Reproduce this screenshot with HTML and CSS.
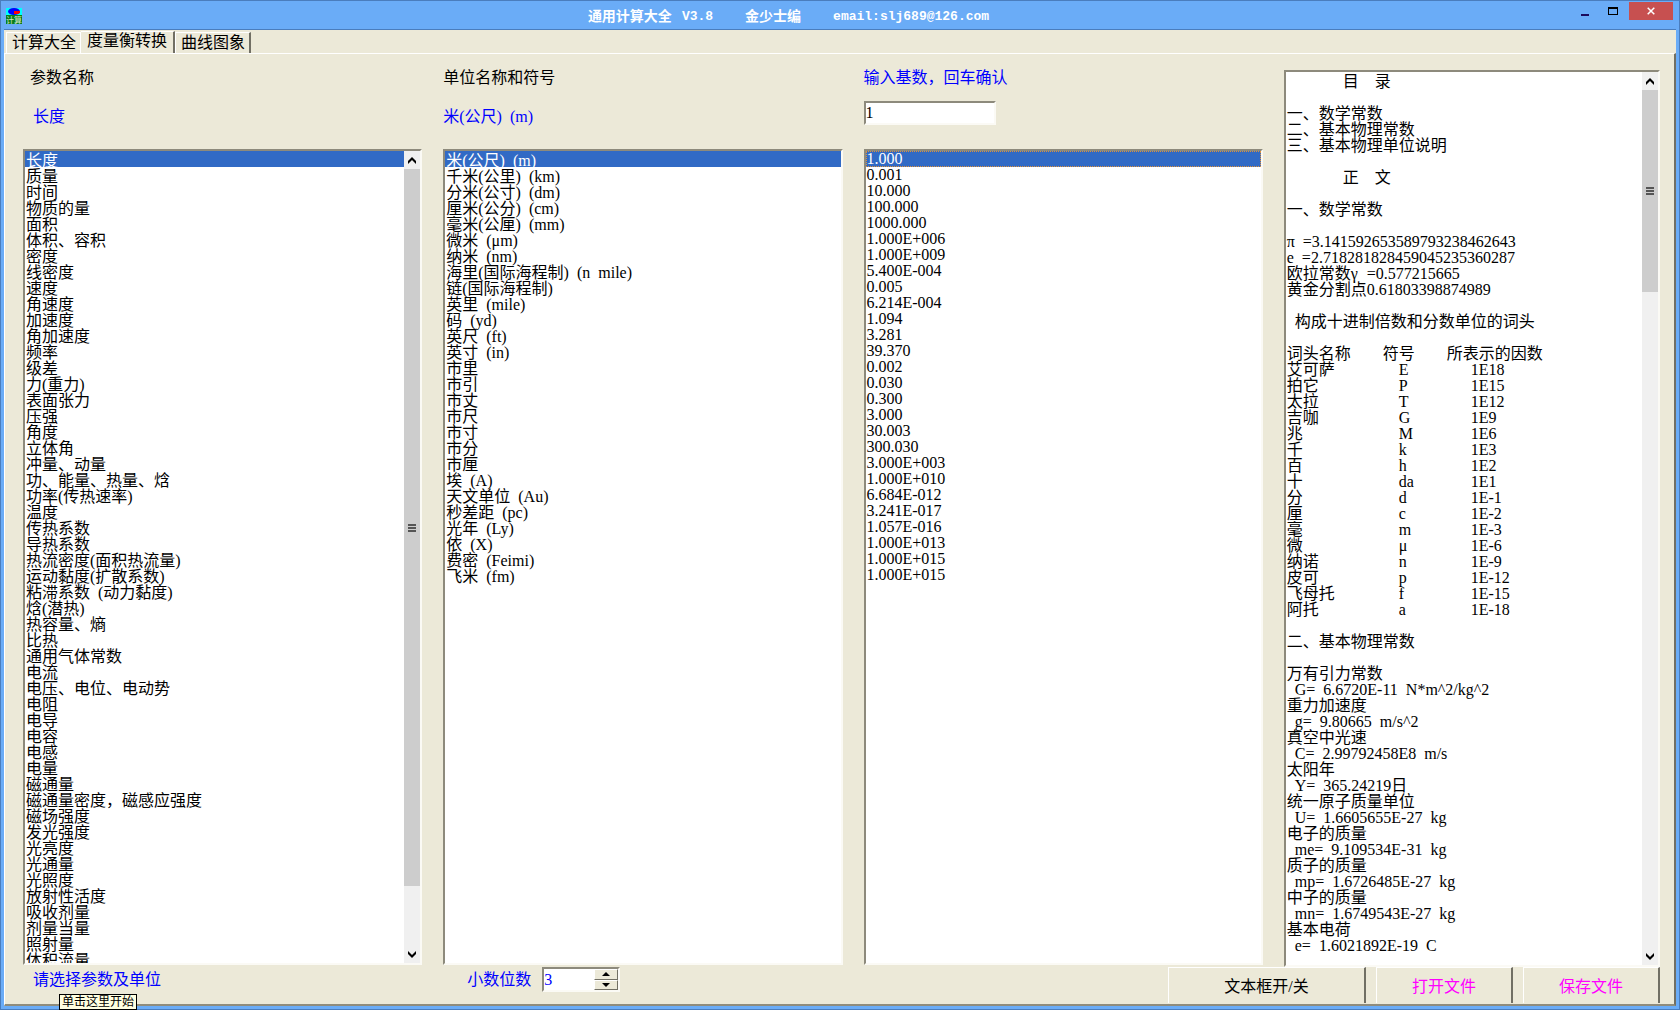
FILE: index.html
```html
<!DOCTYPE html>
<html lang="zh-CN">
<head>
<meta charset="utf-8">
<title>通用计算大全 V3.8</title>
<link rel="stylesheet" href="styles.css">
</head>
<body>
<div class="window">
  <header class="titlebar">
    <svg class="app-icon" width="16" height="16" viewBox="0 0 16 16" aria-hidden="true">
      <rect width="16" height="8" fill="#0ff"/>
      <rect y="7" width="16" height="9" fill="#0a7d1c"/>
      <ellipse cx="8" cy="3.5" rx="6" ry="3.5" fill="#00f"/>
      <path d="M8 3h6v2l-2 1H8z" fill="#f00"/>
      <text x="0" y="15" font-size="8" fill="#cfe8c8">计算</text>
    </svg>
    <h1 class="caption">
      <span>通用计算大全</span><span class="caption-version">V3.8</span>
      <span class="caption-part">金少士编</span>
      <span class="caption-part caption-mail">email:slj689@126.com</span>
    </h1>
    <div class="window-buttons">
      <button class="win-btn" aria-label="最小化"><svg width="10" height="12" viewBox="0 0 10 12"><path d="M1 9h8v2H1z" fill="#1b0a5c"/></svg></button>
      <button class="win-btn" aria-label="最大化"><svg width="10" height="12" viewBox="0 0 10 12"><path d="M0 2h10v8H0zM1 4v5h8V4z" fill="#000" fill-rule="evenodd"/></svg></button>
      <button class="win-btn win-close" aria-label="关闭"><svg width="8" height="8" viewBox="0 0 8 8"><path d="M.7.7l6.6 6.6M7.3.7L.7 7.3" stroke="#fff" stroke-width="1.5"/></svg></button>
    </div>
  </header>

  <div class="client">
    <div class="tabs" role="tablist">
      <button class="tab" role="tab">计算大全</button>
      <button class="tab tab-active" role="tab" aria-selected="true">度量衡转换</button>
      <button class="tab" role="tab">曲线图象</button>
    </div>

    <main class="panel">
      <div class="head head-param">
        <label for="params">参数名称</label>
        <output class="current">长度</output>
      </div>
      <div class="head">
        <label for="units">单位名称和符号</label>
        <output class="current">米(公尺)&ensp;(m)</output>
      </div>
      <div class="head">
        <label class="blue" for="base">输入基数，回车确认</label>
        <input class="base-input sunken" id="base" type="text" value="1">
      </div>

      <div class="memo-box sunken">
<textarea class="memo" aria-label="目录" spellcheck="false">
&emsp;&emsp;&emsp;&ensp;目&emsp;录

一、数学常数
二、基本物理常数
三、基本物理单位说明

&emsp;&emsp;&emsp;&ensp;正&emsp;文

一、数学常数

π&#9;=3.141592653589793238462643
e&ensp;=2.718281828459045235360287
欧拉常数γ&#9;=0.577215665
黄金分割点0.61803398874989

&ensp;构成十进制倍数和分数单位的词头

词头名称&emsp;&emsp;符号&emsp;&emsp;所表示的因数
艾可萨&emsp;&emsp;&emsp;&emsp;E&#9;&#9;&#9;&#9;&#9;&#9;&#9;&#9;1E18
拍它&emsp;&emsp;&emsp;&emsp;&emsp;P&#9;&#9;&#9;&#9;&#9;&#9;&#9;&#9;1E15
太拉&emsp;&emsp;&emsp;&emsp;&emsp;T&#9;&#9;&#9;&#9;&#9;&#9;&#9;&#9;1E12
吉咖&emsp;&emsp;&emsp;&emsp;&emsp;G&#9;&#9;&#9;&#9;&#9;&#9;&#9;&#9;1E9
兆&emsp;&emsp;&emsp;&emsp;&emsp;&emsp;M&#9;&#9;&#9;&#9;&#9;&#9;&#9;1E6
千&emsp;&emsp;&emsp;&emsp;&emsp;&emsp;k&#9;&#9;&#9;&#9;&#9;&#9;&#9;&#9;1E3
百&emsp;&emsp;&emsp;&emsp;&emsp;&emsp;h&#9;&#9;&#9;&#9;&#9;&#9;&#9;&#9;1E2
十&emsp;&emsp;&emsp;&emsp;&emsp;&emsp;da&#9;&#9;&#9;&#9;&#9;&#9;&#9;1E1
分&emsp;&emsp;&emsp;&emsp;&emsp;&emsp;d&#9;&#9;&#9;&#9;&#9;&#9;&#9;&#9;1E-1
厘&emsp;&emsp;&emsp;&emsp;&emsp;&emsp;c&#9;&#9;&#9;&#9;&#9;&#9;&#9;&#9;1E-2
毫&emsp;&emsp;&emsp;&emsp;&emsp;&emsp;m&#9;&#9;&#9;&#9;&#9;&#9;&#9;&#9;1E-3
微&emsp;&emsp;&emsp;&emsp;&emsp;&emsp;μ&#9;&#9;&#9;&#9;&#9;&#9;&#9;&#9;1E-6
纳诺&emsp;&emsp;&emsp;&emsp;&emsp;n&#9;&#9;&#9;&#9;&#9;&#9;&#9;&#9;1E-9
皮可&emsp;&emsp;&emsp;&emsp;&emsp;p&#9;&#9;&#9;&#9;&#9;&#9;&#9;&#9;1E-12
飞母托&emsp;&emsp;&emsp;&emsp;f&#9;&#9;&#9;&#9;&#9;&#9;&#9;&#9;&#9;1E-15
阿托&emsp;&emsp;&emsp;&emsp;&emsp;a&#9;&#9;&#9;&#9;&#9;&#9;&#9;&#9;1E-18

二、基本物理常数

万有引力常数
&ensp;G=&ensp;6.6720E-11&ensp;N*m^2/kg^2
重力加速度
&ensp;g=&ensp;9.80665&ensp;m/s^2
真空中光速
&ensp;C=&ensp;2.99792458E8&ensp;m/s
太阳年
&ensp;Y=&ensp;365.24219日
统一原子质量单位
&ensp;U=&ensp;1.6605655E-27&ensp;kg
电子的质量
&ensp;me=&ensp;9.109534E-31&ensp;kg
质子的质量
&ensp;mp=&ensp;1.6726485E-27&ensp;kg
中子的质量
&ensp;mn=&ensp;1.6749543E-27&ensp;kg
基本电荷
&ensp;e=&ensp;1.6021892E-19&ensp;C</textarea>
        <div class="scrollbar scrollbar-memo" aria-hidden="true">
          <svg class="arrow" viewBox="0 0 16 18"><path d="M4 10l4-4 4 4v3L8 9l-4 4z"/></svg>
          <div class="thumb"><i></i><i></i><i></i></div>
          <div class="track"></div>
          <svg class="arrow" viewBox="0 0 16 18"><path d="M4 6l4 4 4-4v3l-4 4-4-4z"/></svg>
        </div>
      </div>

      <div class="list-box sunken">
        <select class="list" id="params" size="50">
          <option selected>长度</option>
          <option>质量</option>
          <option>时间</option>
          <option>物质的量</option>
          <option>面积</option>
          <option>体积、容积</option>
          <option>密度</option>
          <option>线密度</option>
          <option>速度</option>
          <option>角速度</option>
          <option>加速度</option>
          <option>角加速度</option>
          <option>频率</option>
          <option>级差</option>
          <option>力(重力)</option>
          <option>表面张力</option>
          <option>压强</option>
          <option>角度</option>
          <option>立体角</option>
          <option>冲量、动量</option>
          <option>功、能量、热量、焓</option>
          <option>功率(传热速率)</option>
          <option>温度</option>
          <option>传热系数</option>
          <option>导热系数</option>
          <option>热流密度(面积热流量)</option>
          <option>运动黏度(扩散系数)</option>
          <option>粘滞系数&ensp;(动力黏度)</option>
          <option>焓(潜热)</option>
          <option>热容量、熵</option>
          <option>比热</option>
          <option>通用气体常数</option>
          <option>电流</option>
          <option>电压、电位、电动势</option>
          <option>电阻</option>
          <option>电导</option>
          <option>电容</option>
          <option>电感</option>
          <option>电量</option>
          <option>磁通量</option>
          <option>磁通量密度，磁感应强度</option>
          <option>磁场强度</option>
          <option>发光强度</option>
          <option>光亮度</option>
          <option>光通量</option>
          <option>光照度</option>
          <option>放射性活度</option>
          <option>吸收剂量</option>
          <option>剂量当量</option>
          <option>照射量</option>
          <option>体积流量</option>
        </select>
        <div class="scrollbar scrollbar-params" aria-hidden="true">
          <svg class="arrow" viewBox="0 0 16 18"><path d="M4 10l4-4 4 4v3L8 9l-4 4z"/></svg>
          <div class="thumb"><i></i><i></i><i></i></div>
          <div class="track"></div>
          <svg class="arrow" viewBox="0 0 16 18"><path d="M4 6l4 4 4-4v3l-4 4-4-4z"/></svg>
        </div>
      </div>

      <div class="list-box sunken">
        <select class="list" id="units" size="50">
          <option selected>米(公尺)&ensp;(m)</option>
          <option>千米(公里)&ensp;(km)</option>
          <option>分米(公寸)&ensp;(dm)</option>
          <option>厘米(公分)&ensp;(cm)</option>
          <option>毫米(公厘)&ensp;(mm)</option>
          <option>微米&ensp;(μm)</option>
          <option>纳米&ensp;(nm)</option>
          <option>海里(国际海程制)&ensp;(n&ensp;mile)</option>
          <option>链(国际海程制)</option>
          <option>英里&ensp;(mile)</option>
          <option>码&ensp;(yd)</option>
          <option>英尺&ensp;(ft)</option>
          <option>英寸&ensp;(in)</option>
          <option>市里</option>
          <option>市引</option>
          <option>市丈</option>
          <option>市尺</option>
          <option>市寸</option>
          <option>市分</option>
          <option>市厘</option>
          <option>埃&ensp;(A)</option>
          <option>天文单位&ensp;(Au)</option>
          <option>秒差距&ensp;(pc)</option>
          <option>光年&ensp;(Ly)</option>
          <option>依&ensp;(X)</option>
          <option>费密&ensp;(Feimi)</option>
          <option>飞米&ensp;(fm)</option>
        </select>
      </div>

      <div class="list-box sunken">
        <select class="list list-values" aria-label="数值" size="50">
          <option selected>1.000</option>
          <option>0.001</option>
          <option>10.000</option>
          <option>100.000</option>
          <option>1000.000</option>
          <option>1.000E+006</option>
          <option>1.000E+009</option>
          <option>5.400E-004</option>
          <option>0.005</option>
          <option>6.214E-004</option>
          <option>1.094</option>
          <option>3.281</option>
          <option>39.370</option>
          <option>0.002</option>
          <option>0.030</option>
          <option>0.300</option>
          <option>3.000</option>
          <option>30.003</option>
          <option>300.030</option>
          <option>3.000E+003</option>
          <option>1.000E+010</option>
          <option>6.684E-012</option>
          <option>3.241E-017</option>
          <option>1.057E-016</option>
          <option>1.000E+013</option>
          <option>1.000E+015</option>
          <option>1.000E+015</option>
        </select>
      </div>

      <div class="hint">
        <span>请选择参数及单位</span>
        <div class="tooltip" role="tooltip">单击这里开始</div>
      </div>
      <div class="decimals">
        <label for="digits">小数位数</label>
        <div class="spinner sunken">
          <input class="digits" id="digits" type="text" value="3">
          <div class="spin-buttons">
            <button class="spin" aria-label="增加"><svg width="8" height="4" viewBox="0 0 8 4"><path d="M4 0l4 4H0z"/></svg></button>
            <button class="spin" aria-label="减少"><svg width="8" height="4" viewBox="0 0 8 4"><path d="M4 4L0 0h8z"/></svg></button>
          </div>
        </div>
      </div>
      <div class="actions">
        <button class="action action-toggle">文本框开/关</button>
        <button class="action action-file">打开文件</button>
        <button class="action action-file">保存文件</button>
      </div>
    </main>
  </div>
</div>
</body>
</html>
```
FILE: styles.css
```css
* {
  box-sizing: border-box;
}

body {
  margin: 0;
  color: #000;
  font: 16px/16px "Liberation Serif", "Noto Sans CJK SC", serif;
}

button,
input,
select,
textarea {
  margin: 0;
  padding: 0;
  border: 0;
  border-radius: 0;
  color: inherit;
  font: inherit;
}

.window {
  display: flex;
  flex-direction: column;
  height: 100vh;
  padding: 0 3px 3px;
  border: 1px solid #4a7dbd;
  background: #6aacf7;
}

/* Title bar */

.titlebar {
  display: flex;
  flex: none;
  height: 29px;
  padding: 0 3px 0 2px;
  border-bottom: 1px solid #4a7dbd;
}

.app-icon {
  flex: none;
  margin-top: 7px;
}

.caption {
  display: flex;
  flex: 1;
  justify-content: center;
  margin: 0;
  padding-right: 16px;
  color: #fff;
  font-size: 14px;
  font-weight: bold;
  line-height: 31px;
}

.caption-version,
.caption-mail {
  font-family: "Liberation Mono", monospace;
  font-size: 13px;
}

.caption-version {
  margin-left: 10px;
}

.caption-part {
  margin-left: 32px;
}

.window-buttons {
  display: flex;
  padding-top: 1px;
}

.win-btn {
  display: flex;
  align-items: center;
  justify-content: center;
  width: 28px;
  height: 18px;
  background: none;
}

.win-close {
  width: 44px;
  margin-left: 2px;
  background: #c75050;
}

/* Tabs */

.client {
  display: flex;
  flex: 1;
  flex-direction: column;
  min-height: 0;
  background: #ece9d8;
}

.tabs {
  display: flex;
  flex: none;
  align-items: flex-end;
  height: 23px;
  padding-left: 2px;
}

.tab {
  height: 21px;
  padding: 0 4px 0 5px;
  border: 1px solid #fff;
  border-right: 2px solid #716f64;
  border-bottom: 0;
  background: #ece9d8;
  white-space: nowrap;
}

.tab:first-child {
  border-right: 1px solid #fff;
}

.tab-active {
  height: 23px;
  margin-bottom: -1px;
  padding: 0 6px 4px;
  border-left: 0;
}

/* Panel */

.panel {
  display: grid;
  flex: 1;
  grid-template-columns: 399fr 399fr 399fr 376fr;
  grid-template-rows: 79px minmax(0, 1fr) 36px;
  column-gap: 21px;
  min-height: 0;
  padding: 16px 14px 1px 18px;
  border: 1px solid #fff;
  border-right: 2px solid #716f64;
  border-bottom: 2px solid #8f8c7c;
}

.sunken {
  border: 2px solid;
  border-color: #8d8a7c #fbfaf5 #fbfaf5 #8d8a7c;
  background: #fff;
}

.head {
  display: flex;
  flex-direction: column;
  align-items: flex-start;
  gap: 15px;
}

.head-param {
  padding-left: 7px;
}

.head-param .current {
  padding-left: 3px;
}

.current {
  padding-top: 8px;
  color: #00f;
}

.blue {
  color: #00f;
}

.base-input {
  width: 132px;
  height: 24px;
}

.list-box {
  display: flex;
  min-width: 0;
  min-height: 0;
  margin-bottom: 2px;
}

.list {
  flex: 1;
  height: auto;
  min-width: 0;
  min-height: 0;
  overflow: hidden;
  outline: 0;
  background: #fff;
  appearance: none;
}

.list option {
  display: flex;
  align-items: center;
  min-height: 16px;
  height: 16px;
  padding: 0 1px;
  color: #000;
  line-height: 16px;
}

.list option:checked {
  background: #316ac5;
  color: #fff;
}

.list-values option:checked {
  outline: 1px dotted #e0923a;
  outline-offset: -1px;
}

.memo-box {
  display: flex;
  grid-row: 1 / 3;
  grid-column: 4;
  min-width: 0;
  min-height: 0;
}

.memo {
  flex: 1;
  min-width: 0;
  padding: 2px 1px 0;
  overflow: hidden;
  outline: 0;
  background: #fff;
  resize: none;
  tab-size: 8px;
}

/* Scroll bars */

.scrollbar {
  display: flex;
  flex: none;
  flex-direction: column;
  width: 16px;
  background: #f0f0f0;
}

.arrow {
  flex: none;
  width: 16px;
  height: 18px;
}

.thumb {
  display: flex;
  flex-direction: column;
  align-items: center;
  justify-content: center;
  gap: 1px;
  background: #cdcdcd;
}

.thumb i {
  width: 8px;
  height: 2px;
  background: #555;
}

.scrollbar-params .thumb {
  flex: 720;
}

.scrollbar-params .track {
  flex: 59;
}

.scrollbar-memo .thumb {
  flex: 202;
}

.scrollbar-memo .track {
  flex: 656;
}

/* Bottom row */

.hint {
  position: relative;
  padding: 5px 0 0 10px;
  color: #00f;
}

.tooltip {
  position: absolute;
  top: 27px;
  left: 36px;
  padding: 0 2px;
  border: 1px solid #000;
  background: #ffffe1;
  color: #000;
  font-size: 12px;
  line-height: 14px;
  white-space: nowrap;
}

.decimals {
  display: flex;
  align-items: flex-start;
  gap: 11px;
  padding-left: 24px;
  color: #00f;
}

.decimals label {
  padding-top: 5px;
}

.spinner {
  display: flex;
  width: 78px;
  height: 25px;
}

.digits {
  flex: 1;
  min-width: 0;
  background: #fff;
}

.spin-buttons {
  display: flex;
  flex-direction: column;
  width: 24px;
}

.spin {
  display: flex;
  flex: 1;
  align-items: center;
  justify-content: center;
  border: 1px solid;
  border-color: #fff #716f64 #716f64 #fff;
  background: #ece9d8;
  color: #000;
}

.actions {
  display: flex;
  grid-column: 3 / 5;
  justify-content: flex-end;
  gap: 10px;
}

.action {
  width: 137px;
  padding-top: 2px;
  border: 1px solid #fff;
  border-right: 2px solid #716f64;
  border-bottom: 0;
  background: #ece9d8;
}

.action-toggle {
  width: 198px;
}

.action-file {
  color: #f0f;
}
```
